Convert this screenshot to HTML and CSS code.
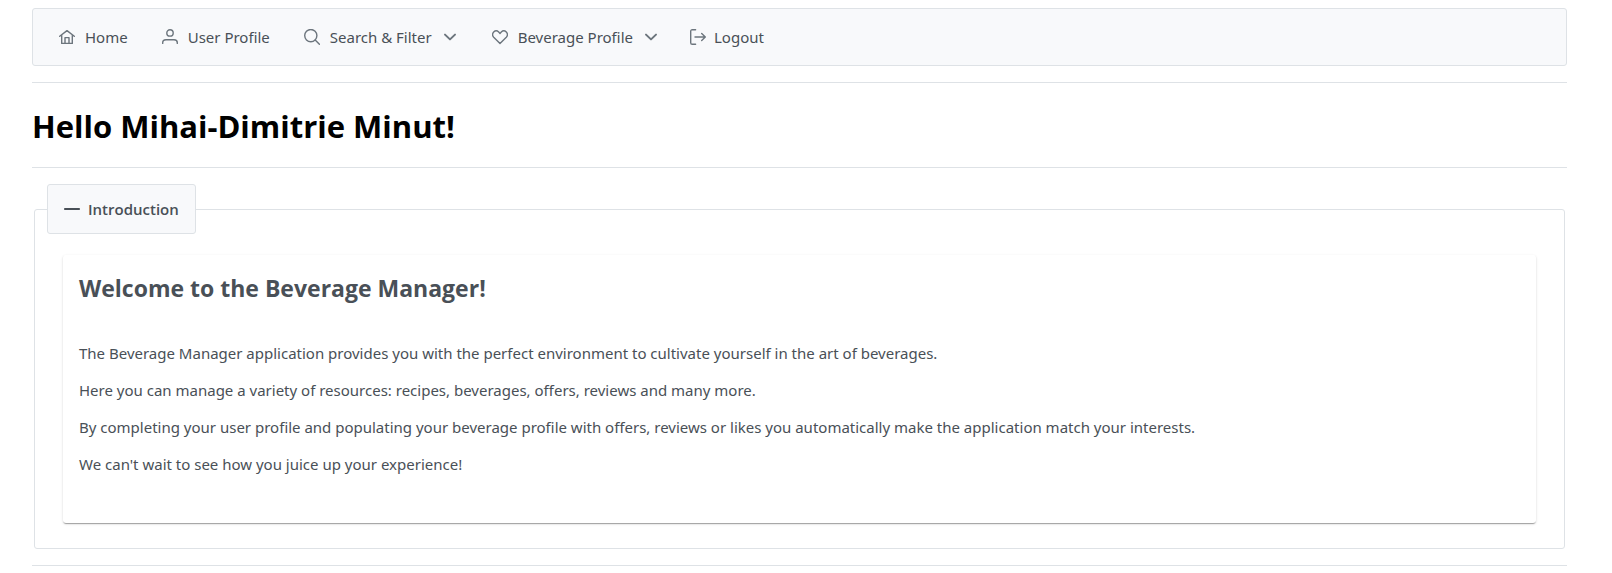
FILE: index.html
```html
<!DOCTYPE html>
<html lang="en">
<head>
<meta charset="utf-8">
<title>Beverage Manager</title>
<link rel="stylesheet" href="styles.css">
</head>
<body>
<div class="page">
  <nav class="menubar">
    <a class="menu-item" href="#">
      <svg class="icon" viewBox="0 0 16 16"><path d="M.7 7.2 8 1.600l7.300 5.600M2.700 6v8.400h10.600V6M6 14.200V8.600h4v5.600"/></svg>
      <span>Home</span>
    </a>
    <a class="menu-item" href="#">
      <svg class="icon" viewBox="0 0 16 16"><circle cx="8" cy="3.900" r="3.200"/><path d="M.7 14.400v-.6c0-1.900 1.500-3 3.300-3h8c1.800 0 3.300 1.100 3.300 3v.6"/></svg>
      <span>User Profile</span>
    </a>
    <button class="menu-item" type="button" aria-haspopup="true">
      <svg class="icon" viewBox="0 0 16 16"><circle cx="6.800" cy="6.600" r="6.100"/><path d="m11.200 11 4.200 4.200"/></svg>
      <span>Search &amp; Filter</span>
      <svg class="icon chevron" viewBox="0 0 16 16"><path d="m3 5.600 5 4.800 5-4.800"/></svg>
    </button>
    <button class="menu-item" type="button" aria-haspopup="true">
      <svg class="icon" viewBox="0 0 16 16"><path d="M8 14.500 1.700 8.200C.4 6.800.4 4.500 1.700 3.100 3.100 1.700 5.300 1.700 6.700 3.100L8 4.400l1.300-1.300c1.400-1.400 3.600-1.400 5 0 1.300 1.400 1.300 3.700 0 5.100z"/></svg>
      <span>Beverage Profile</span>
      <svg class="icon chevron" viewBox="0 0 16 16"><path d="m3 5.600 5 4.800 5-4.800"/></svg>
    </button>
    <a class="menu-item menu-item-compact" href="#">
      <svg class="icon" viewBox="0 0 16 16"><path d="M5.600.700H2.300C1.300.700.700 1.300.700 2.300v11.400c0 1 .6 1.600 1.600 1.600h3.300M5 8h10.300M11.700 4.400 15.300 8l-3.600 3.600"/></svg>
      <span>Logout</span>
    </a>
  </nav>
  <hr class="rule">
  <h1 class="greeting">Hello Mihai-Dimitrie Minut!</h1>
  <hr class="rule">
  <fieldset class="panel">
    <legend class="panel-legend">
      <button class="panel-toggle" type="button" aria-expanded="true">
        <svg class="icon toggle-icon" viewBox="0 0 16 16"><path d="M.8 8h14.400"/></svg>
        <span>Introduction</span>
      </button>
    </legend>
    <section class="card">
      <h2 class="card-title">Welcome to the Beverage Manager!</h2>
      <div class="card-content">
        <p>The Beverage Manager application provides you with the perfect environment to cultivate yourself in the art of beverages.</p>
        <p>Here you can manage a variety of resources: recipes, beverages, offers, reviews and many more.</p>
        <p>By completing your user profile and populating your beverage profile with offers, reviews or likes you automatically make the application match your interests.</p>
        <p>We can't wait to see how you juice up your experience!</p>
      </div>
    </section>
  </fieldset>
  <hr class="rule">
</div>
</body>
</html>
```

FILE: styles.css
```css
* {
  box-sizing: border-box;
}

body {
  margin: 0;
  background: #fff;
  color: #495057;
  font-family: "Segoe UI", "Noto Sans", "Open Sans", sans-serif;
  font-size: 15px;
  line-height: 21px;
}

.page {
  padding: 8px 45px 0 32px;
}

.menubar {
  display: flex;
  flex-wrap: wrap;
  padding: 8px 9px;
  background: #f8f9fb;
  border: 1px solid #dee2e6;
  border-radius: 3px;
}

.menu-item {
  display: flex;
  align-items: center;
  gap: 10px;
  padding: 10px 17px;
  border: 0;
  background: none;
  color: #495057;
  font: inherit;
  line-height: 20px;
  text-decoration: none;
  cursor: pointer;
}

.menu-item-compact {
  gap: 8px;
  padding-left: 14px;
}

.icon {
  flex: none;
  width: 16px;
  height: 16px;
  fill: none;
  stroke: #6c757d;
  stroke-width: 1.4;
  stroke-linecap: round;
  stroke-linejoin: round;
}

.chevron {
  stroke-width: 2;
}

.rule {
  height: 1px;
  margin: 16px 0;
  border: 0;
  background: #dee2e6;
}

.greeting {
  margin: 22px 0 20px;
  color: #000;
  font-family: "Segoe UI", "Open Sans", "Noto Sans", sans-serif;
  font-size: 31px;
  line-height: 42px;
}

.panel {
  min-width: 0;
  margin: 0 2px;
  padding: 21px 28px 25px 12px;
  border: 1px solid #dee2e6;
  border-radius: 3px;
}

.panel-legend {
  padding: 0;
}

.panel-toggle {
  display: flex;
  align-items: center;
  gap: 8px;
  padding: 14px 16px;
  border: 1px solid #dee2e6;
  border-radius: 3px;
  background: #f8f9fb;
  color: #495057;
  font-family: "Segoe UI", "Open Sans", "Noto Sans", sans-serif;
  font-size: 15px;
  font-weight: 600;
  line-height: 20px;
  cursor: pointer;
}

.toggle-icon {
  stroke: #495057;
  stroke-width: 1.8;
}

.card {
  margin-left: 16px;
  padding: 16px;
  border-radius: 3px;
  box-shadow: 0 2px 1px -1px rgba(0, 0, 0, 0.2), 0 1px 1px rgba(0, 0, 0, 0.14), 0 1px 3px rgba(0, 0, 0, 0.12);
}

.card-title {
  margin: 0 0 6px;
  font-family: "Segoe UI", "Open Sans", "Noto Sans", sans-serif;
  font-size: 23px;
  line-height: 34px;
}

.card-content {
  padding: 16px 0;
}

.card-content p {
  margin: 16px 0;
}
```
